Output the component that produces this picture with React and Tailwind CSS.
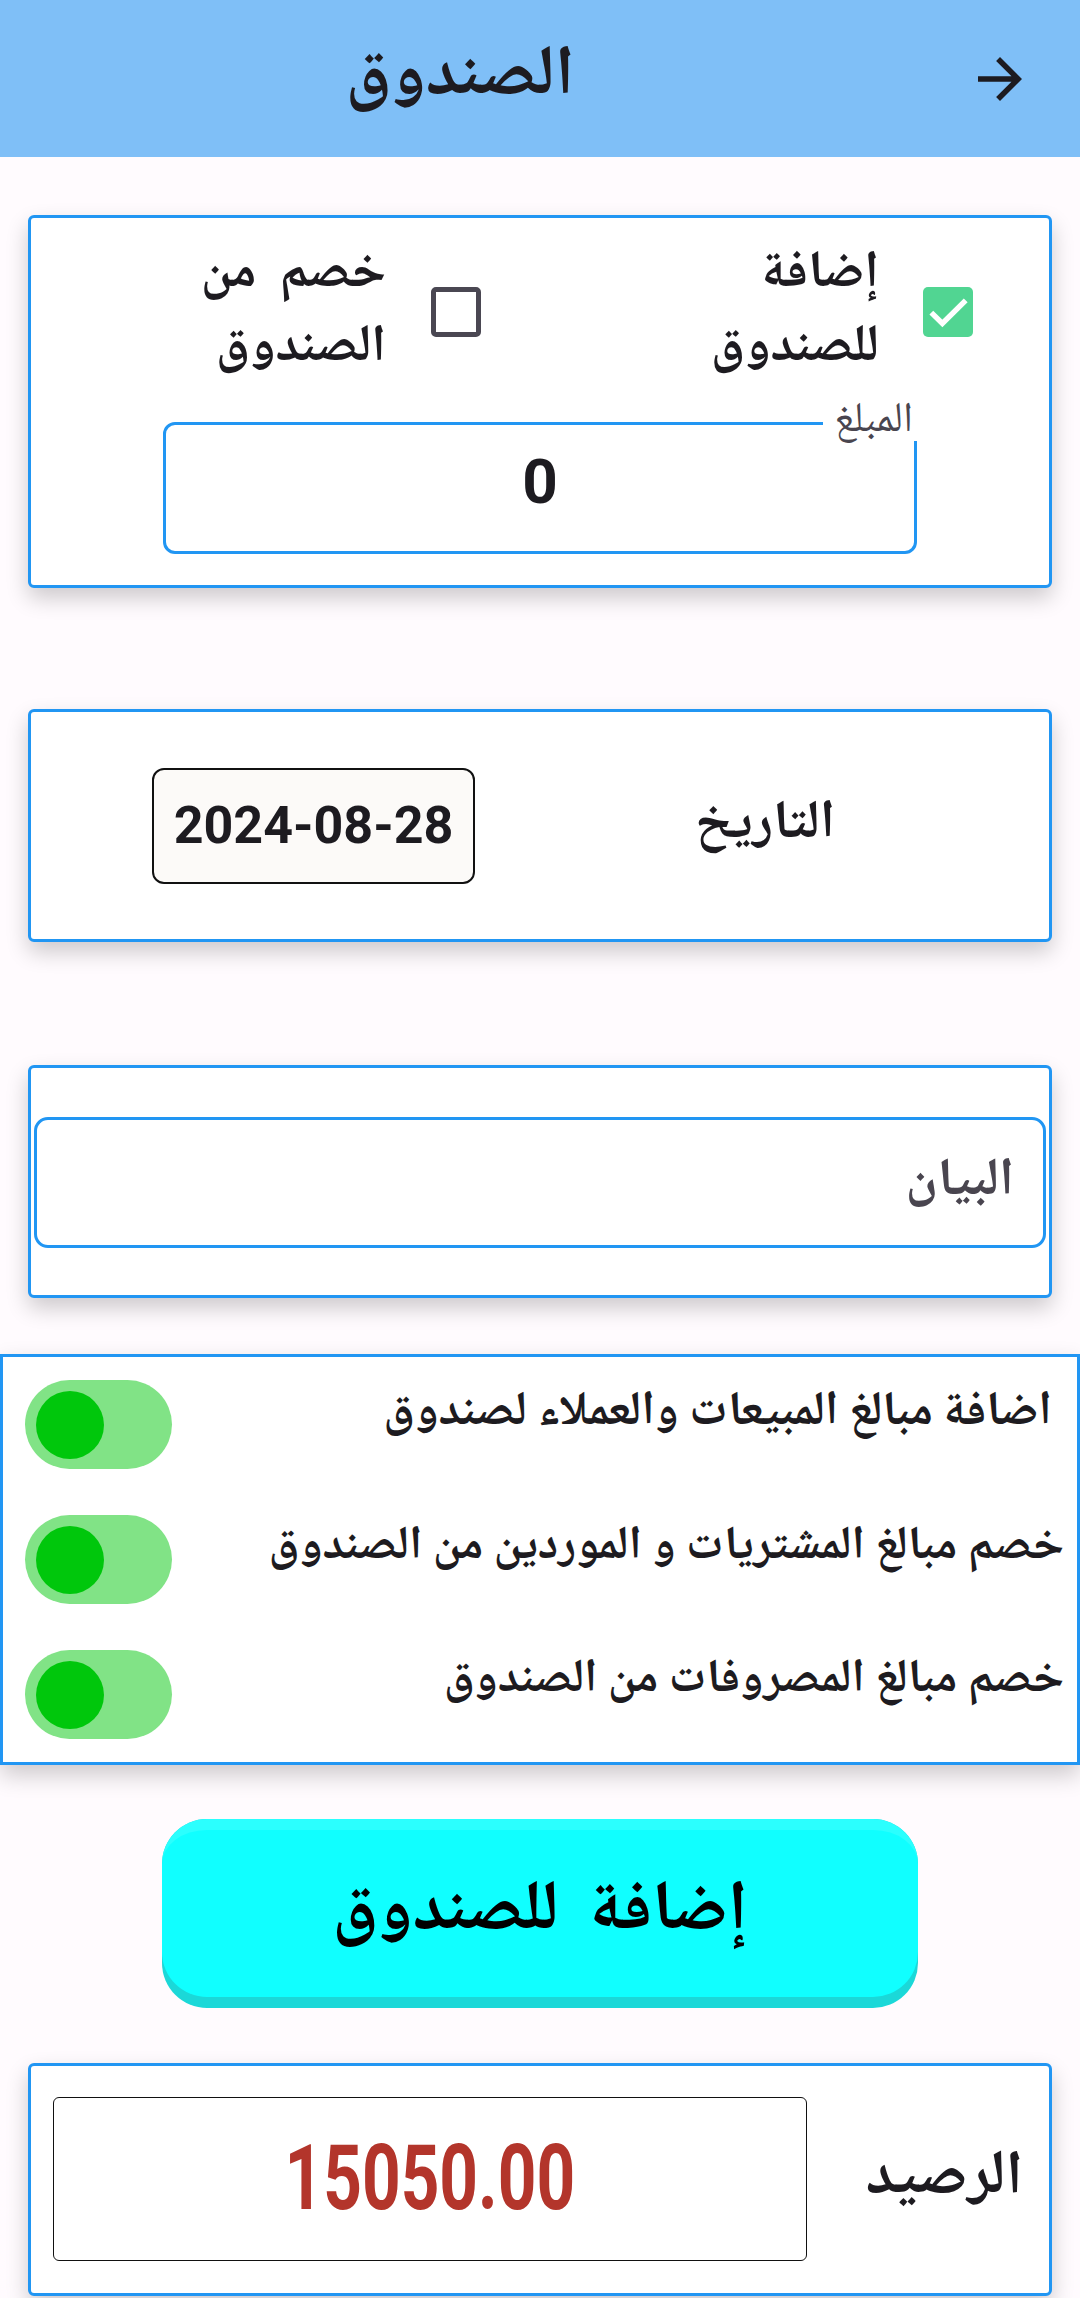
import React from "react";
import { MdArrowForward } from "react-icons/md";

const AR = { fontFamily: '"Noto Naskh Arabic", "Noto Sans Arabic", "DejaVu Sans", sans-serif' };
const RB = { fontFamily: 'Roboto, "Liberation Sans", sans-serif' };

function Toggle() {
  return (
    <div dir="ltr" className="w-[147px] h-[89px] rounded-full bg-[#81e386] flex items-center justify-start pl-[11px] shrink-0">
      <div className="w-[68px] h-[68px] rounded-full bg-[#00c70c]" />
    </div>
  );
}

function Card({ className = "", children }) {
  return (
    <div className={"mx-[28px] bg-white border-[3px] border-[#2196f3] rounded-[6px] shadow-[0_10px_22px_rgba(0,0,0,0.2)] " + className}>
      {children}
    </div>
  );
}

export default function App() {
  return (
    <div dir="rtl" className="w-[1080px] min-h-[2298px] bg-[#fffbfe] text-[#1d1b20] overflow-hidden" style={AR}>
      {/* Header */}
      <div className="h-[157px] bg-[#7fbff7] flex items-center">
        <div className="w-[160px] h-full flex items-center justify-center">
          <MdArrowForward size={66} color="#1d1b20" />
        </div>
        <div className="flex-1 text-center text-[70px] font-bold leading-none">الصندوق</div>
      </div>

      {/* Card 1 */}
      <Card className="mt-[58px] pt-[19px] pb-[31px]">
        <div className="h-[150px] flex items-center pr-[76px]">
          <div className="w-[50px] h-[50px] rounded-[5px] bg-[#51d592] flex items-center justify-center shrink-0">
            <svg width="50" height="50" viewBox="0 0 24 24">
              <path d="M4 12.3l5.3 5.2L20.5 6.4" fill="none" stroke="white" strokeWidth="2.6" />
            </svg>
          </div>
          <div className="w-[200px] mr-[44px] text-[52px] font-bold text-right shrink-0 whitespace-pre flex flex-col gap-[10px]">
            <div className="h-[64px] leading-[64px]">إضافة</div>
            <div className="h-[64px] leading-[64px]">للصندوق</div>
          </div>
          <div className="w-[50px] h-[50px] rounded-[5px] border-[5px] border-[#4a4752] mr-[198px] shrink-0" />
          <div className="w-[220px] mr-[45px] text-[52px] font-bold text-right shrink-0 whitespace-pre flex flex-col gap-[10px]">
            <div className="h-[64px] leading-[64px]">خصم  من</div>
            <div className="h-[64px] leading-[64px]">الصندوق</div>
          </div>
        </div>
        <div className="mt-[35px] mx-auto w-[754px] h-[132px] border-[3px] border-[#2196f3] rounded-[12px] relative flex items-center justify-center">
          <div className="absolute -top-[22px] -right-[4px] h-[38px] bg-white pl-[11px] pr-[5px] text-[42px] leading-[38px] text-[#49454f]">المبلغ</div>
          <div className="text-[62px] font-bold leading-none -mt-[12px]" style={RB}>0</div>
        </div>
      </Card>

      {/* Card 2 - date */}
      <Card className="mt-[121px] h-[233px] flex items-center pr-[164px]">
        <div className="w-[240px] text-center text-[54px] font-bold">التاريخ</div>
        <div className="mr-[170px] w-[323px] h-[116px] border-2 border-[#111] rounded-[12px] bg-[#fcfaf8] flex items-center justify-center text-[52px] font-bold" style={RB}>
          <span dir="ltr">2024-08-28</span>
        </div>
      </Card>

      {/* Card 3 - description */}
      <Card className="mt-[123px] pt-[49px] pb-[47px] px-[3px]">
        <div className="h-[131px] border-[3px] border-[#2196f3] rounded-[14px] flex items-center pr-[29px] text-[53px] font-bold text-[#49454f]">
          البيان
        </div>
      </Card>

      {/* Switches */}
      <div className="mt-[56px] bg-white border-[3px] border-[#2196f3] shadow-[0_10px_22px_rgba(0,0,0,0.2)]">
        <div className="h-[135px] flex items-center justify-between pr-[25px] pl-[22px]">
          <div className="text-[48px] font-bold -mt-[22px] whitespace-nowrap">اضافة مبالغ المبيعات والعملاء لصندوق</div>
          <Toggle />
        </div>
        <div className="h-[135px] flex items-center justify-between pr-[13px] pl-[22px]">
          <div className="text-[47px] font-bold -mt-[22px] whitespace-nowrap">خصم مبالغ المشتريات و الموردين من الصندوق</div>
          <Toggle />
        </div>
        <div className="h-[135px] flex items-center justify-between pr-[13px] pl-[22px]">
          <div className="text-[47px] font-bold -mt-[26px] whitespace-nowrap">خصم مبالغ المصروفات من الصندوق</div>
          <Toggle />
        </div>
      </div>

      {/* Button */}
      <div className="mt-[54px] mx-auto w-[756px] h-[189px] rounded-[45px] bg-[#1bd8d8] pb-[11px]">
        <div className="h-full rounded-[45px] bg-[#10ffff] border-t-[11px] border-[#2bfffe] flex items-center justify-center text-[70px] font-bold text-black whitespace-pre">
          إضافة  للصندوق
        </div>
      </div>

      {/* Balance */}
      <Card className="mt-[55px] pt-[31px] pb-[32px] flex items-center justify-between pr-[26px] pl-[22px]">
        <div className="text-[62px] font-bold">الرصيد</div>
        <div className="w-[754px] h-[164px] border-[1.5px] border-[#111] rounded-[6px] flex items-center justify-center">
          <span className="text-[90px] font-bold text-[#b3352b] scale-x-[0.75] leading-none" style={RB}>15050.00</span>
        </div>
      </Card>
    </div>
  );
}
